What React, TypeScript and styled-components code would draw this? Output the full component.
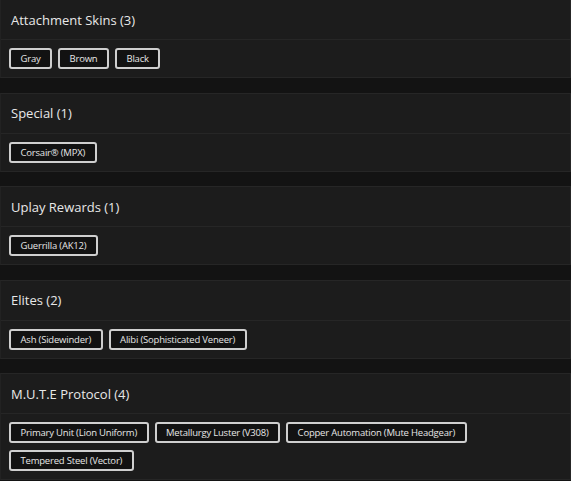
import React from "react";
import styled, { createGlobalStyle } from "styled-components";

const Global = createGlobalStyle`
  html, body { margin: 0; padding: 0; background: #131313; }
  body { font-family: "Open Sans", "Noto Sans", sans-serif; }
`;

const Page = styled.div`
  display: flex;
  flex-direction: column;
  gap: 14.5px;
  width: 571px;
  margin-top: -1px;
`;

const Section = styled.section`
  background: #1c1c1c;
  border: 1px solid #262626;
  border-left-color: #222;
  box-sizing: border-box;
`;

const Header = styled.div`
  height: 39px;
  display: flex;
  align-items: center;
  padding: 0 10px;
  border-bottom: 1px solid #262626;
  color: #e8e8e8;
  font-size: 13px;
  font-weight: 500;
`;

const Body = styled.div`
  display: flex;
  flex-wrap: wrap;
  gap: 6.5px 6px;
  padding: 8px 8px 8px;
`;

const Chip = styled.span`
  display: inline-flex;
  align-items: center;
  height: 21px;
  box-sizing: border-box;
  padding: 0 9.5px;
  border: 2px solid #cfcfcf;
  border-radius: 3px;
  background: #121212;
  color: #e6e6e6;
  font-size: 9.5px;
  letter-spacing: -0.2px;
  white-space: nowrap;
`;

const data: { title: string; items: string[] }[] = [
  { title: "Attachment Skins (3)", items: ["Gray", "Brown", "Black"] },
  { title: "Special (1)", items: ["Corsair® (MPX)"] },
  { title: "Uplay Rewards (1)", items: ["Guerrilla (AK12)"] },
  { title: "Elites (2)", items: ["Ash (Sidewinder)", "Alibi (Sophisticated Veneer)"] },
  {
    title: "M.U.T.E Protocol (4)",
    items: [
      "Primary Unit (Lion Uniform)",
      "Metallurgy Luster (V308)",
      "Copper Automation (Mute Headgear)",
      "Tempered Steel (Vector)",
    ],
  },
];

export default function App() {
  return (
    <>
      <Global />
      <Page>
        {data.map((s) => (
          <Section key={s.title}>
            <Header>{s.title}</Header>
            <Body>
              {s.items.map((i) => (
                <Chip key={i}>{i}</Chip>
              ))}
            </Body>
          </Section>
        ))}
      </Page>
    </>
  );
}
